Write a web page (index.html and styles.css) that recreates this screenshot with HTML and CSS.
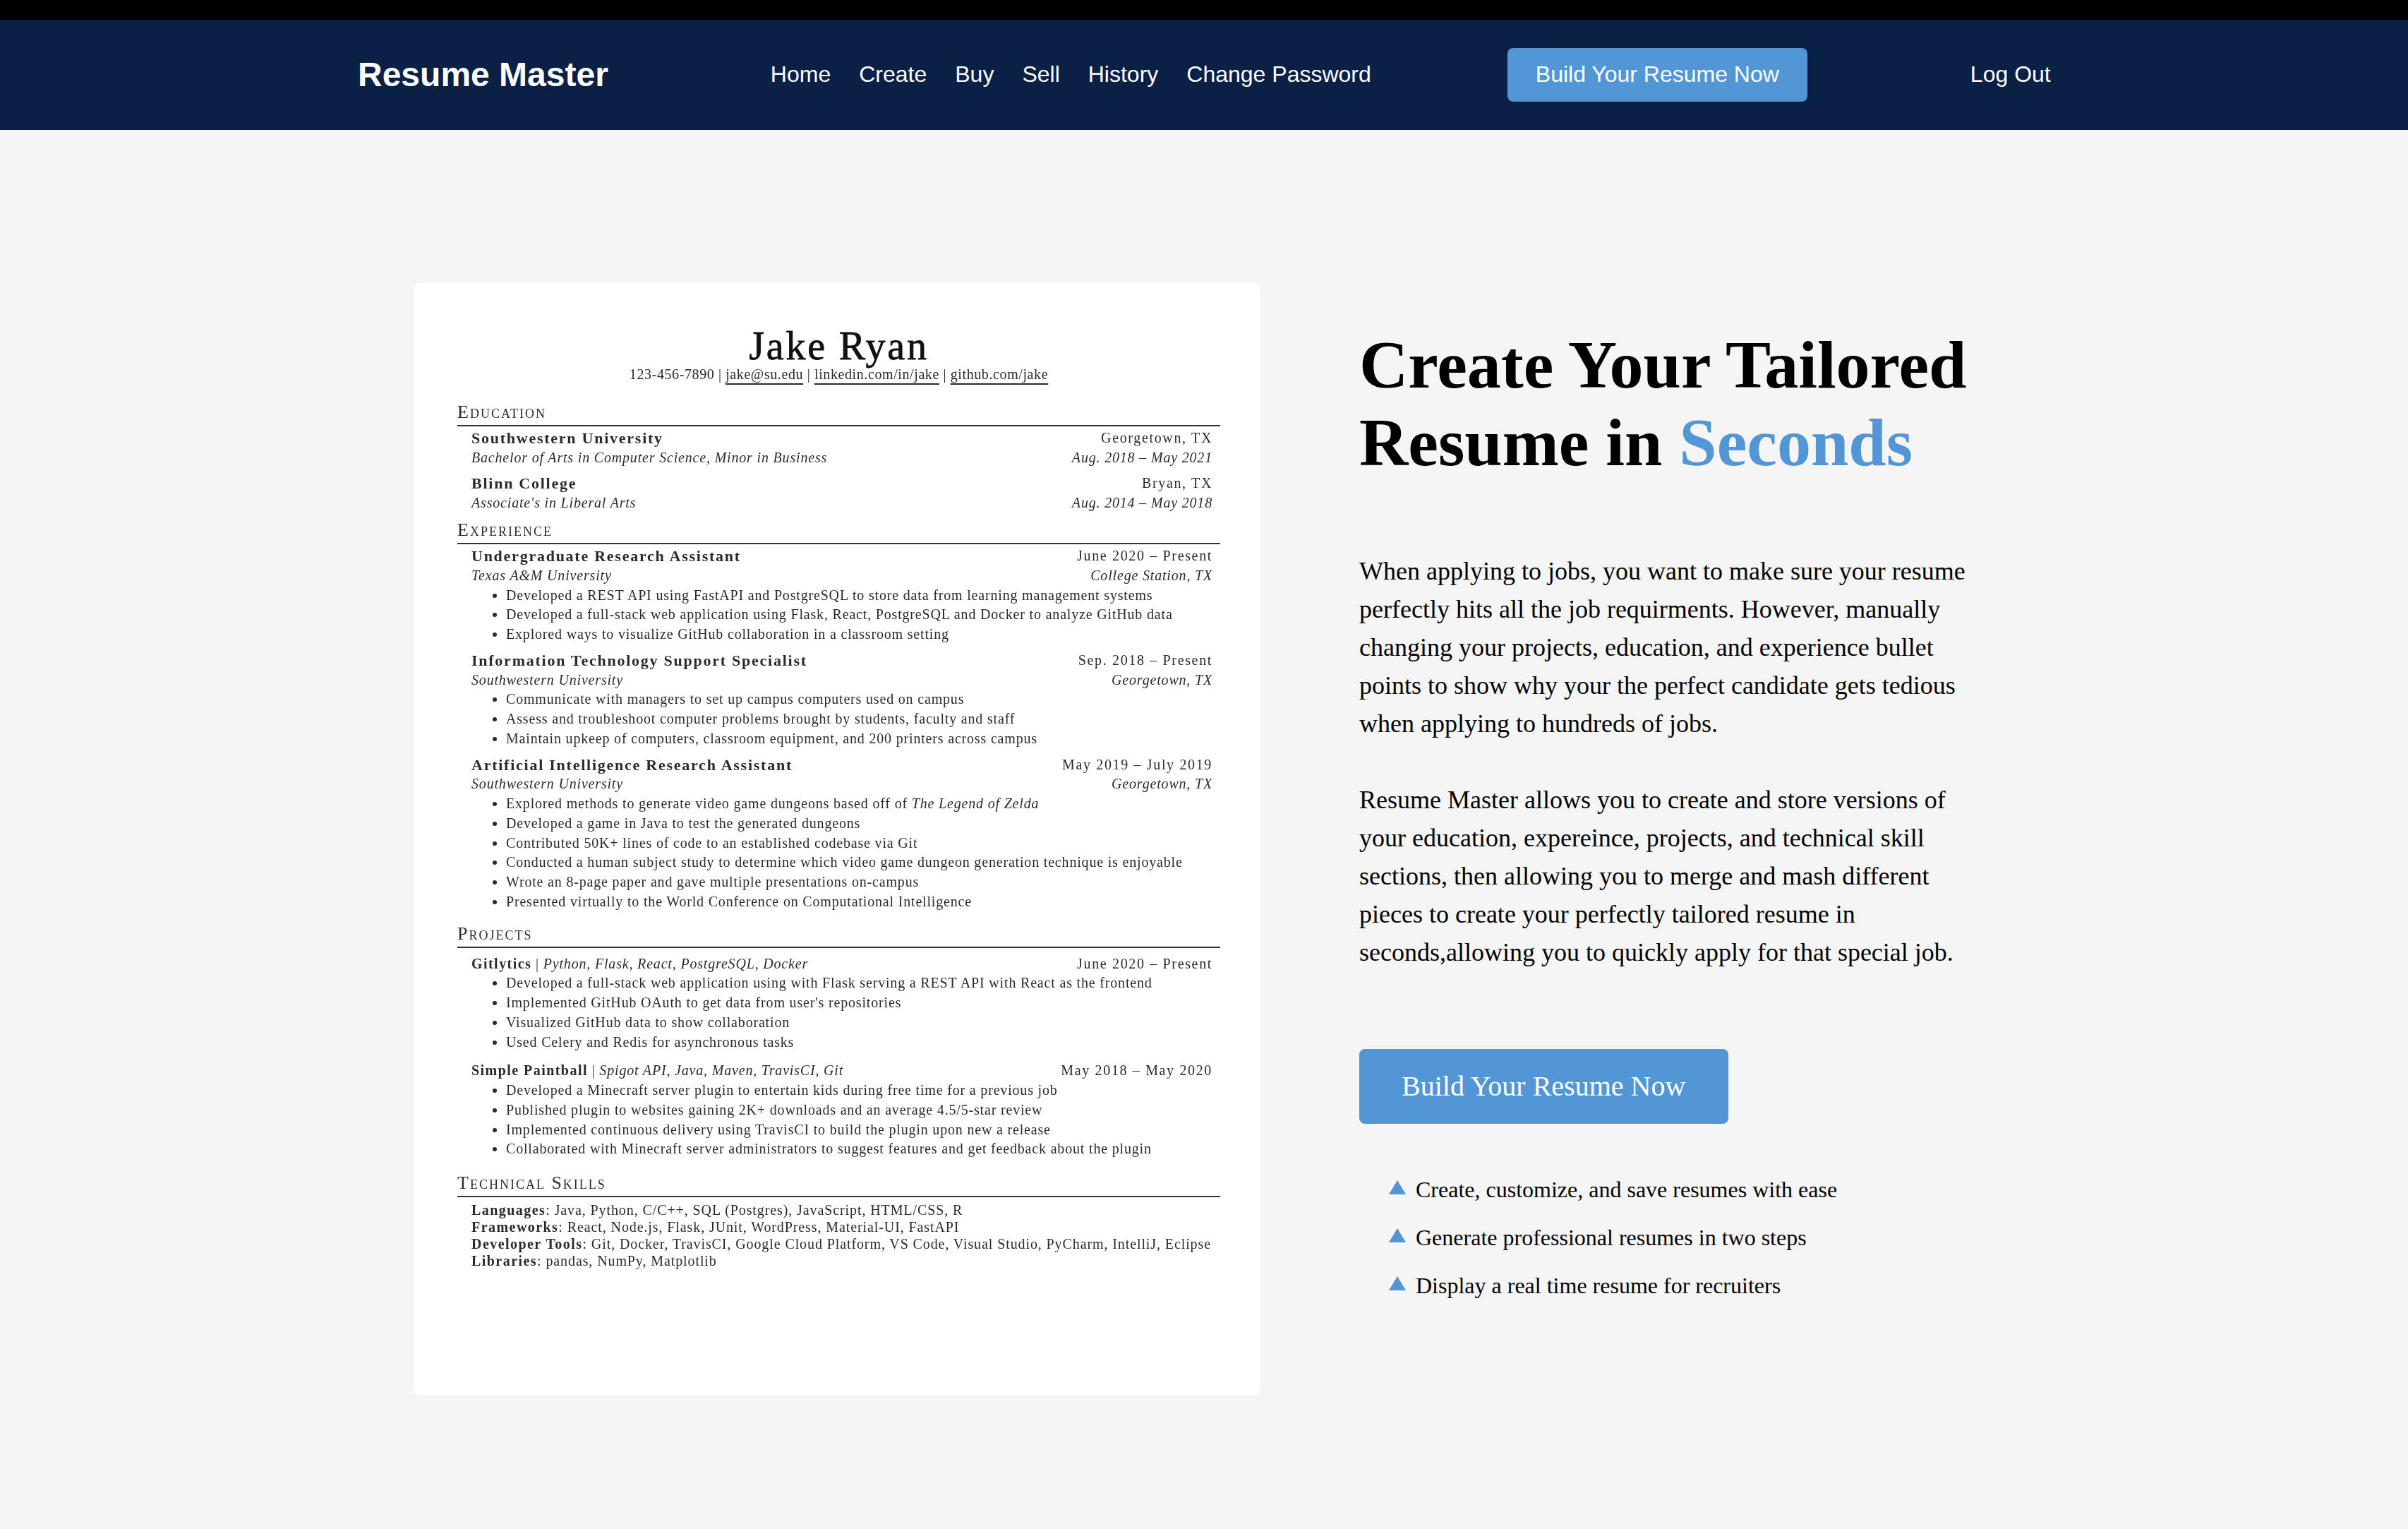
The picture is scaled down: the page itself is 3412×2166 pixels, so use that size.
FILE: index.html
```html
<!DOCTYPE html>
<html lang="en">
<head>
  <meta charset="UTF-8">
  <meta name="viewport" content="width=device-width, initial-scale=1.0">
  <title>Resume Master</title>
  <link rel="stylesheet" href="styles.css">
</head>
<body>
  <div class="topbar"></div>

  <header class="header">
    <div class="header-inner">
      <a class="logo" href="#">Resume Master</a>
      <nav class="nav">
        <a href="#">Home</a>
        <a href="#">Create</a>
        <a href="#">Buy</a>
        <a href="#">Sell</a>
        <a href="#">History</a>
        <a href="#">Change Password</a>
      </nav>
      <a class="nav-button" href="#">Build Your Resume Now</a>
      <a class="logout" href="#">Log Out</a>
    </div>
  </header>

  <main class="hero">
    <div class="resume-card">
      <div class="resume">
        <div class="resume-name">Jake Ryan</div>
        <div class="resume-contact">123-456-7890 | <a href="#">jake@su.edu</a> | <a href="#">linkedin.com/in/jake</a> | <a href="#">github.com/jake</a></div>

        <div class="section-title education-title">Education</div>
        <div class="row"><b>Southwestern University</b><span>Georgetown, TX</span></div>
        <div class="row sub"><span>Bachelor of Arts in Computer Science, Minor in Business</span><span>Aug. 2018 – May 2021</span></div>
        <div class="row entry"><b>Blinn College</b><span>Bryan, TX</span></div>
        <div class="row sub"><span>Associate's in Liberal Arts</span><span>Aug. 2014 – May 2018</span></div>

        <div class="section-title experience-title">Experience</div>
        <div class="row"><b>Undergraduate Research Assistant</b><span>June 2020 – Present</span></div>
        <div class="row sub"><span>Texas A&amp;M University</span><span>College Station, TX</span></div>
        <ul>
          <li>Developed a REST API using FastAPI and PostgreSQL to store data from learning management systems</li>
          <li>Developed a full-stack web application using Flask, React, PostgreSQL and Docker to analyze GitHub data</li>
          <li>Explored ways to visualize GitHub collaboration in a classroom setting</li>
        </ul>
        <div class="row entry"><b>Information Technology Support Specialist</b><span>Sep. 2018 – Present</span></div>
        <div class="row sub"><span>Southwestern University</span><span>Georgetown, TX</span></div>
        <ul>
          <li>Communicate with managers to set up campus computers used on campus</li>
          <li>Assess and troubleshoot computer problems brought by students, faculty and staff</li>
          <li>Maintain upkeep of computers, classroom equipment, and 200 printers across campus</li>
        </ul>
        <div class="row entry"><b>Artificial Intelligence Research Assistant</b><span>May 2019 – July 2019</span></div>
        <div class="row sub"><span>Southwestern University</span><span>Georgetown, TX</span></div>
        <ul>
          <li>Explored methods to generate video game dungeons based off of <i>The Legend of Zelda</i></li>
          <li>Developed a game in Java to test the generated dungeons</li>
          <li>Contributed 50K+ lines of code to an established codebase via Git</li>
          <li>Conducted a human subject study to determine which video game dungeon generation technique is enjoyable</li>
          <li>Wrote an 8-page paper and gave multiple presentations on-campus</li>
          <li>Presented virtually to the World Conference on Computational Intelligence</li>
        </ul>

        <div class="section-title projects-title">Projects</div>
        <div class="row project"><span><b>Gitlytics</b> | <i>Python, Flask, React, PostgreSQL, Docker</i></span><span>June 2020 – Present</span></div>
        <ul>
          <li>Developed a full-stack web application using with Flask serving a REST API with React as the frontend</li>
          <li>Implemented GitHub OAuth to get data from user's repositories</li>
          <li>Visualized GitHub data to show collaboration</li>
          <li>Used Celery and Redis for asynchronous tasks</li>
        </ul>
        <div class="row project project-next"><span><b>Simple Paintball</b> | <i>Spigot API, Java, Maven, TravisCI, Git</i></span><span>May 2018 – May 2020</span></div>
        <ul>
          <li>Developed a Minecraft server plugin to entertain kids during free time for a previous job</li>
          <li>Published plugin to websites gaining 2K+ downloads and an average 4.5/5-star review</li>
          <li>Implemented continuous delivery using TravisCI to build the plugin upon new a release</li>
          <li>Collaborated with Minecraft server administrators to suggest features and get feedback about the plugin</li>
        </ul>

        <div class="section-title skills-title">Technical Skills</div>
        <div class="skills">
          <div><b>Languages</b>: Java, Python, C/C++, SQL (Postgres), JavaScript, HTML/CSS, R</div>
          <div><b>Frameworks</b>: React, Node.js, Flask, JUnit, WordPress, Material-UI, FastAPI</div>
          <div><b>Developer Tools</b>: Git, Docker, TravisCI, Google Cloud Platform, VS Code, Visual Studio, PyCharm, IntelliJ, Eclipse</div>
          <div><b>Libraries</b>: pandas, NumPy, Matplotlib</div>
        </div>
      </div>
    </div>

    <div class="hero-text">
      <h1>Create Your Tailored<br>Resume in <span class="accent">Seconds</span></h1>
      <p>When applying to jobs, you want to make sure your resume perfectly hits all the job requirments. However, manually changing your projects, education, and experience bullet points to show why your the perfect candidate gets tedious when applying to hundreds of jobs.</p>
      <p>Resume Master allows you to create and store versions of your education, expereince, projects, and technical skill sections, then allowing you to merge and mash different pieces to create your perfectly tailored resume in seconds,allowing you to quickly apply for that special job.</p>
      <a class="cta" href="#">Build Your Resume Now</a>
      <ul class="features">
        <li>Create, customize, and save resumes with ease</li>
        <li>Generate professional resumes in two steps</li>
        <li>Display a real time resume for recruiters</li>
      </ul>
    </div>
  </main>
</body>
</html>
```

FILE: styles.css
```css
body {
  margin: 0;
  background-color: #f5f5f5;
  font-family: "Liberation Serif", serif;
  color: #000;
}

a {
  color: inherit;
  text-decoration: none;
}

.topbar {
  height: 28px;
  background-color: #000;
}

.header {
  height: 156px;
  background-color: #0a2145;
  color: #fff;
  font-family: "Liberation Sans", sans-serif;
  white-space: nowrap;
}

.header-inner {
  display: flex;
  align-items: center;
  height: 100%;
  margin-left: 507px;
}

.logo {
  font-size: 48px;
  font-weight: bold;
  margin-right: 230px;
  padding-bottom: 2px;
}

.nav {
  display: flex;
  gap: 40px;
  font-size: 32px;
  margin-right: 193px;
  padding-bottom: 2px;
}

.nav-button {
  font-size: 32px;
  padding: 19px 40px 21px;
  line-height: 36px;
  background-color: #5296d5;
  border-radius: 8px;
  margin-right: 231px;
}

.logout {
  font-size: 32px;
  padding-bottom: 2px;
}

.hero {
  display: flex;
  align-items: flex-start;
  gap: 140px;
  padding: 217px 0 0 586px;
}

.resume-card {
  width: 1200px;
  height: 1576px;
  flex-shrink: 0;
  box-sizing: border-box;
  padding: 62px 57px 0 62px;
  background-color: #fff;
  border-radius: 8px;
}

/* resume text */
.resume {
  font-size: 20px;
  line-height: 27.75px;
  letter-spacing: 0.82px;
  color: #2a2a2a;
  filter: blur(0.4px);
}

.resume-name {
  font-size: 56px;
  line-height: 54px;
  letter-spacing: 2.8px;
  text-align: center;
  color: #111;
  -webkit-text-stroke: 0.8px #111;
}

.resume-contact {
  text-align: center;
  letter-spacing: 0.6px;
}

.resume-contact a {
  text-decoration: underline;
  text-decoration-thickness: 2px;
  text-underline-offset: 6px;
}

.section-title {
  font-size: 26px;
  line-height: 26px;
  letter-spacing: 2px;
  font-variant: small-caps;
  padding-bottom: 5px;
  border-bottom: 2px solid #333;
  margin-bottom: 3px;
}

.education-title {
  margin-top: 26px;
}

.experience-title {
  margin-top: 11.4px;
}

.projects-title {
  margin-top: 18.4px;
  margin-bottom: 8.5px;
}

.skills-title {
  margin-top: 21px;
  margin-bottom: 6px;
}

.row {
  display: flex;
  justify-content: space-between;
  padding: 0 11px 0 20px;
}

.row b {
  font-size: 22px;
  letter-spacing: 1.75px;
}

.row:not(.sub) > span:last-child {
  letter-spacing: 1.65px;
}

.row.project b,
.skills b {
  font-size: 20px;
  letter-spacing: 1.45px;
}

.sub {
  font-style: italic;
}

.entry {
  margin-top: 9px;
}

.project-next {
  margin-top: 13px;
}

.resume ul {
  margin: 0;
  padding: 0 0 0 69px;
}

.skills {
  padding-left: 20px;
  line-height: 24px;
  letter-spacing: 0.9px;
}

/* right column */
.hero-text {
  width: 880px;
  padding-top: 61px;
}

h1 {
  font-size: 96px;
  line-height: 110px;
  margin: 0 0 100px;
}

.accent {
  color: #5296d5;
}

.hero-text p {
  font-size: 36px;
  line-height: 54px;
  margin: 0 0 54px;
}

.cta {
  display: inline-block;
  margin-top: 56px;
  padding: 30px 61px 30px 60px;
  font-size: 40px;
  line-height: 46px;
  color: #fff;
  background-color: #5296d5;
  border-radius: 8px;
}

.features {
  list-style: none;
  margin: 59px 0 0;
  padding: 0 0 0 42px;
}

.features li {
  display: flex;
  align-items: center;
  gap: 14px;
  font-size: 32px;
  height: 68px;
}

.features li::before {
  content: "";
  width: 0;
  height: 0;
  border-left: 12px solid transparent;
  border-right: 12px solid transparent;
  border-bottom: 20px solid #5296d5;
  margin-top: -6px;
}
```
